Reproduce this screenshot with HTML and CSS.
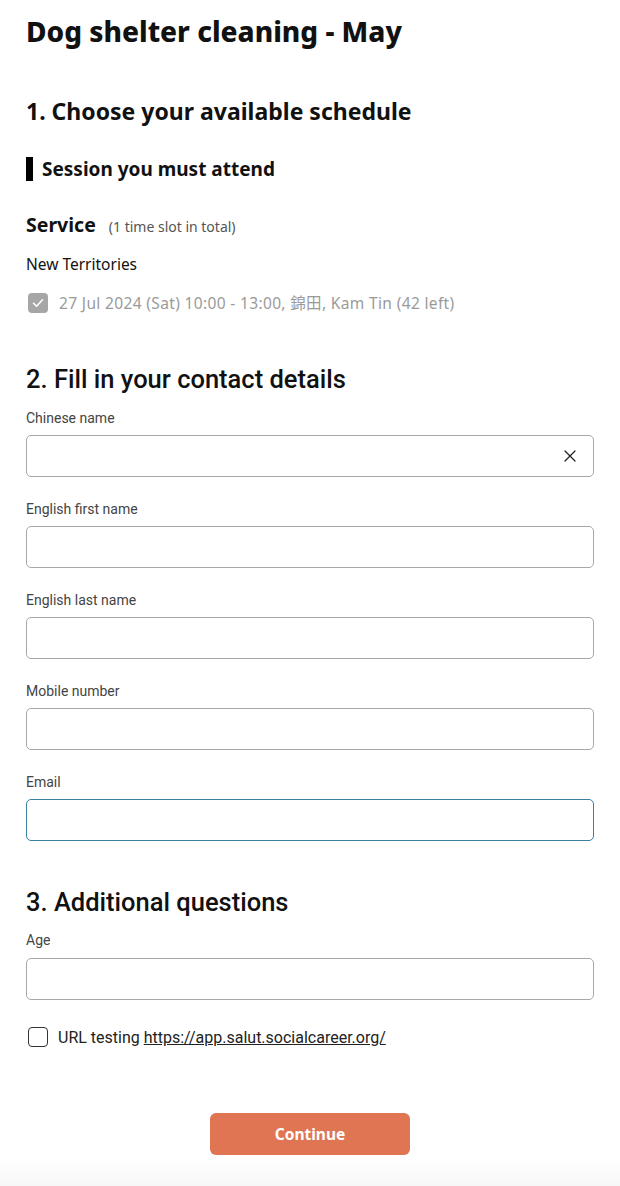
FILE: index.html
```html
<!DOCTYPE html>
<html lang="en">
<head>
<meta charset="utf-8">
<title>Dog shelter cleaning - May</title>
<link rel="stylesheet" href="styles.css">
</head>
<body>
<main class="page">
  <h1 class="title">Dog shelter cleaning - May</h1>

  <section class="section schedule">
    <h2 class="step step-first">1. Choose your available schedule</h2>
    <h3 class="bar-heading">Session you must attend</h3>
    <div class="service">
      <span class="service-name">Service</span>
      <span class="service-note">(1 time slot in total)</span>
    </div>
    <div class="region">New Territories</div>
    <label class="slot">
      <span class="box box-checked">
        <svg width="12" height="10" viewBox="0 0 12 10"><path d="M1.5 5.2 L4.6 8.2 L10.5 1.8" fill="none" stroke="#fff" stroke-width="1.6" stroke-linecap="round" stroke-linejoin="round"/></svg>
      </span>
      <span class="slot-text">27 Jul 2024 (Sat) 10:00 - 13:00, 錦田, Kam Tin (42 left)</span>
    </label>
  </section>

  <section class="section contact">
    <h2 class="step step-din">2. Fill in your contact details</h2>
    <div class="field">
      <label class="label">Chinese name</label>
      <div class="input">
        <svg class="clear" width="12" height="12" viewBox="0 0 12 12"><path d="M1 1 L11 11 M11 1 L1 11" stroke="#222" stroke-width="1.3" stroke-linecap="round"/></svg>
      </div>
    </div>
    <div class="field">
      <label class="label">English first name</label>
      <div class="input"></div>
    </div>
    <div class="field">
      <label class="label">English last name</label>
      <div class="input"></div>
    </div>
    <div class="field">
      <label class="label">Mobile number</label>
      <div class="input"></div>
    </div>
    <div class="field">
      <label class="label">Email</label>
      <div class="input input-focus"></div>
    </div>
  </section>

  <section class="section extra">
    <h2 class="step step-din">3. Additional questions</h2>
    <div class="field">
      <label class="label">Age</label>
      <div class="input"></div>
    </div>
    <label class="url-row">
      <span class="box box-empty"></span>
      <span class="url-text">URL testing <a class="link" href="#">https://app.salut.socialcareer.org/</a></span>
    </label>
  </section>
</main>
<footer class="footer">
  <button class="continue">Continue</button>
</footer>
</body>
</html>
```
FILE: styles.css
```css
* { box-sizing: border-box; }
html, body { margin: 0; padding: 0; background: #fff; }
body {
  font-family: "Noto Sans", "Noto Sans CJK TC", sans-serif;
  color: #111;
  width: 620px;
  height: 1186px;
  position: relative;
  overflow: hidden;
}
.page {
  padding: 12px 26px 0 26px;
}
.title {
  margin: 0;
  font-size: 28px;
  font-weight: 800;
  line-height: 38px;
  color: #111;
}
.section { margin: 0; }
.step {
  margin: 0;
  font-weight: 700;
  font-size: 23px;
  line-height: 30px;
  color: #111;
}
.step-din {
  font-family: "Roboto", sans-serif;
  font-weight: 500;
  font-size: 25.5px;
}
.step-first { margin-top: 46px; }
.bar-heading {
  margin: 31px 0 0 0;
  border-left: 7px solid #000;
  padding-left: 9px;
  font-size: 19px;
  font-weight: 700;
  line-height: 24px;
}
.service {
  margin-top: 32px;
  display: flex;
  align-items: baseline;
  gap: 13px;
}
.service-name { font-size: 19.5px; font-weight: 700; line-height: 24px; }
.service-note { font-size: 14px; color: #555; }
.region {
  margin-top: 16px;
  font-size: 15.5px;
  line-height: 22px;
  color: #111;
}
.slot {
  margin-top: 17px;
  display: flex;
  align-items: center;
  gap: 11px;
  padding-left: 2px;
}
.box {
  width: 20px;
  height: 20px;
  border-radius: 4px;
  display: flex;
  align-items: center;
  justify-content: center;
  flex: none;
}
.box-checked { background: #a6a6a6; }
.box-empty { border: 1.5px solid #333; background: #fff; }
.slot-text { font-size: 15.5px; letter-spacing: 0.35px; color: #9a9a9a; line-height: 22px; }

.contact .step { margin-top: 50px; }
.field { display: flex; flex-direction: column; }
.label {
  font-family: "Roboto", sans-serif;
  font-size: 14px;
  line-height: 18px;
  color: #444;
  margin-top: 15px;
  margin-bottom: 8px;
}
.contact .field + .field .label { margin-top: 23px; }
.input {
  height: 42px;
  border: 1px solid #a8a8a8;
  border-radius: 5px;
  background: #fff;
  display: flex;
  align-items: center;
  justify-content: flex-end;
  padding-right: 17px;
}
.input-focus { border-color: #3a7ea0; }
.extra .step { margin-top: 46px; }
.extra .label { margin-top: 14px; margin-bottom: 9px; }
.url-row {
  margin-top: 27px;
  display: flex;
  align-items: center;
  gap: 10px;
  padding-left: 2px;
}
.url-text {
  font-family: "Roboto", sans-serif;
  font-size: 16px;
  color: #222;
}
.link { color: #222; text-decoration: underline; }
.footer {
  position: absolute;
  left: 0;
  right: 0;
  bottom: 0;
  height: 96px;
  background: linear-gradient(to bottom, rgba(255,255,255,1) 70%, #f7f7f7 100%);
  display: flex;
  justify-content: center;
  padding-top: 23px;
}
.continue {
  width: 200px;
  height: 42px;
  border: none;
  border-radius: 6px;
  background: #e07553;
  color: #fff;
  font-family: "Noto Sans", sans-serif;
  font-size: 15.5px;
  font-weight: 700;
}
```
